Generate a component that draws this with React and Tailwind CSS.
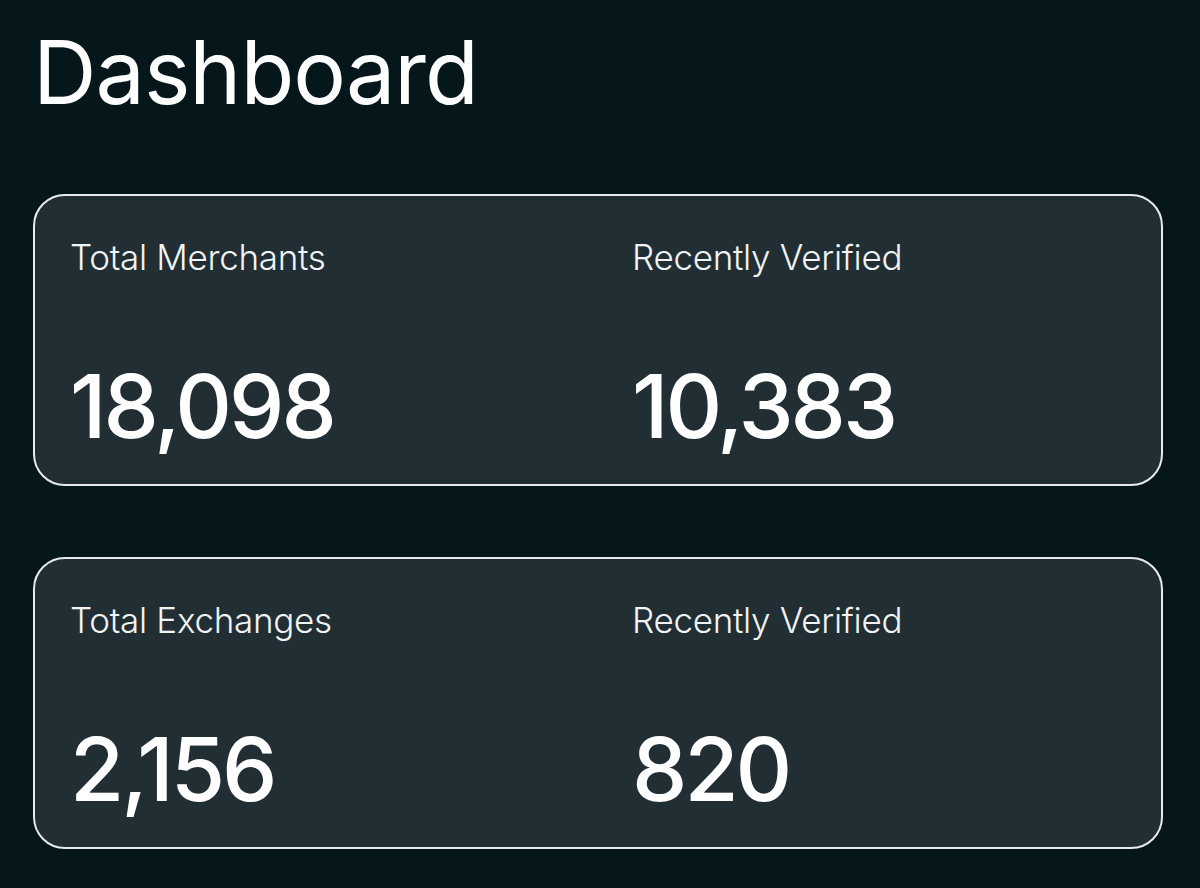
import React from "react";

const stats = [
  [
    { label: "Total Merchants", value: "18,098" },
    { label: "Recently Verified", value: "10,383" },
  ],
  [
    { label: "Total Exchanges", value: "2,156" },
    { label: "Recently Verified", value: "820" },
  ],
];

const App = () => {
  return (
    <div
      className="min-h-[888px] bg-[#06171c] text-white px-[33px] pt-[20px]"
      style={{ fontFamily: "Inter, 'Noto Sans', sans-serif" }}
    >
      {/* Header */}
      <h1 className="text-[88px] leading-[104px] font-normal tracking-[-1px]">Dashboard</h1>

      {/* Stat cards */}
      <div className="mt-[70px] flex flex-col gap-[71px] w-[1130px]">
        {stats.map((row, i) => (
          <div
            key={i}
            className="h-[292px] rounded-[32px] border-2 border-[#e8eaeb] bg-[#212e34] grid grid-cols-2 gap-x-[68px] px-[35px] pt-[36px]"
          >
            {row.map((s, j) => (
              <div key={j} className="flex flex-col">
                <span className="text-[35px] leading-[50px] font-light text-[#f1f3f4] tracking-[-0.3px]">
                  {s.label}
                </span>
                <span className="mt-[76px] text-[88px] leading-[96px] font-medium tracking-[-3px]">
                  {s.value}
                </span>
              </div>
            ))}
          </div>
        ))}
      </div>
    </div>
  );
};

export default App;
